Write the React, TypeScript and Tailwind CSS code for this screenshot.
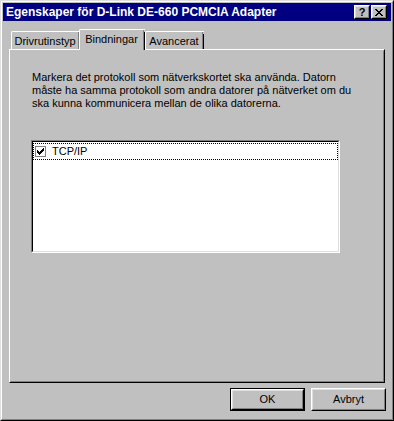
import React from "react";

function CheckIcon() {
  return (
    <svg width="7" height="7" viewBox="0 0 7 7" shapeRendering="crispEdges">
      <rect x="6" y="0" width="1" height="3" fill="#000" />
      <rect x="5" y="1" width="1" height="3" fill="#000" />
      <rect x="4" y="2" width="1" height="3" fill="#000" />
      <rect x="3" y="3" width="1" height="3" fill="#000" />
      <rect x="2" y="4" width="1" height="3" fill="#000" />
      <rect x="1" y="3" width="1" height="3" fill="#000" />
      <rect x="0" y="2" width="1" height="3" fill="#000" />
    </svg>
  );
}

function CaptionButton({ children }: { children: React.ReactNode }) {
  return (
    <div className="w-[16px] h-[14px] border border-t-white border-l-white border-r-black border-b-black bg-[#c0c0c0]">
      <div className="w-full h-full border border-t-[#dfdfdf] border-l-[#dfdfdf] border-r-[#808080] border-b-[#808080] flex items-center justify-center">
        {children}
      </div>
    </div>
  );
}

export default function App() {
  const font = "font-['Liberation_Sans',Arial,sans-serif]";
  return (
    <div
      className={`w-[394px] h-[421px] bg-[#c0c0c0] border border-t-[#dfdfdf] border-l-[#dfdfdf] border-r-black border-b-black ${font} text-[11px] text-black`}
    >
      <div className="w-full h-full border border-t-white border-l-white border-r-[#808080] border-b-[#808080] p-px flex flex-col">
        {/* Title bar */}
        <div className="h-[18px] bg-[#000080] flex items-center pl-[3px] pr-[4px]">
          <span className="text-white font-bold text-[12px] leading-none flex-1">
            Egenskaper för D-Link DE-660 PCMCIA Adapter
          </span>
          <CaptionButton>
            <span className="text-black font-bold text-[11px] leading-none mt-px">?</span>
          </CaptionButton>
          <div className="w-px" />
          <CaptionButton>
            <svg width="8" height="7" viewBox="0 0 8 7" shapeRendering="crispEdges">
              <path d="M0 0h2v1h-2zM6 0h2v1h-2zM1 1h2v1h-2zM5 1h2v1h-2zM2 2h4v1h-4zM3 3h2v1h-2zM2 4h4v1h-4zM1 5h2v1h-2zM5 5h2v1h-2zM0 6h2v1h-2zM6 6h2v1h-2z" fill="#000" />
            </svg>
          </CaptionButton>
        </div>

        {/* Tabs */}
        <div className="h-[28px] flex items-end pl-[8px]">
          <div className="w-[69px] h-[18px] border-l border-t border-white rounded-tl-[2px] flex">
            <div className="flex-1 border-r border-[#808080] flex items-center justify-center pt-px">
              Drivrutinstyp
            </div>
            <div className="w-px bg-black mt-[2px]" />
          </div>
          <div className="relative z-10 -ml-[1px] mb-[-1px] w-[66px] h-[21px] bg-[#c0c0c0] border-l border-t border-white rounded-tl-[2px] flex">
            <div className="flex-1 border-r border-[#808080] flex items-center justify-center pb-[1px]">
              Bindningar
            </div>
            <div className="w-px bg-black mt-[2px]" />
          </div>
          <div className="w-[59px] h-[18px] border-l border-t border-white rounded-tl-[2px] flex">
            <div className="flex-1 border-r border-[#808080] flex items-center justify-center pt-px">
              Avancerat
            </div>
            <div className="w-px bg-black mt-[2px]" />
          </div>
        </div>

        {/* Panel */}
        <div className="mx-[6px] w-[376px] h-[334px] border border-t-white border-l-white border-r-black border-b-black">
          <div className="w-full h-full border border-t-[#c0c0c0] border-l-[#c0c0c0] border-r-[#808080] border-b-[#808080] pt-[20px] pl-[21px]">
            <p className="leading-[13px]">
              Markera det protokoll som nätverkskortet ska använda. Datorn
              <br />
              måste ha samma protokoll som andra datorer på nätverket om du
              <br />
              ska kunna kommunicera mellan de olika datorerna.
            </p>
            <div className="mt-[30px] -ml-px w-[309px] h-[113px] border border-t-[#808080] border-l-[#808080] border-r-white border-b-white">
              <div className="w-full h-full border border-t-black border-l-black border-r-[#dfdfdf] border-b-[#dfdfdf] bg-white pt-px">
                <div className="h-[17px] border border-dotted border-black flex items-center pl-[1px]">
                  <div className="w-[11px] h-[11px] border border-[#808080] bg-white flex items-center justify-center">
                    <CheckIcon />
                  </div>
                  <span className="ml-[6px] leading-none">TCP/IP</span>
                </div>
              </div>
            </div>
          </div>
        </div>

        {/* Buttons */}
        <div className="flex justify-end gap-[6px] pr-[5px] mt-[5px]">
          <div className="w-[75px] h-[23px] border border-black">
            <div className="w-full h-full border border-t-white border-l-white border-r-black border-b-black">
              <div className="w-full h-full border border-t-[#dfdfdf] border-l-[#dfdfdf] border-r-[#808080] border-b-[#808080] flex items-center justify-center">
                OK
              </div>
            </div>
          </div>
          <div className="w-[75px] h-[23px] border border-t-white border-l-white border-r-black border-b-black">
            <div className="w-full h-full border border-t-[#dfdfdf] border-l-[#dfdfdf] border-r-[#808080] border-b-[#808080] flex items-center justify-center">
              Avbryt
            </div>
          </div>
        </div>
      </div>
    </div>
  );
}
